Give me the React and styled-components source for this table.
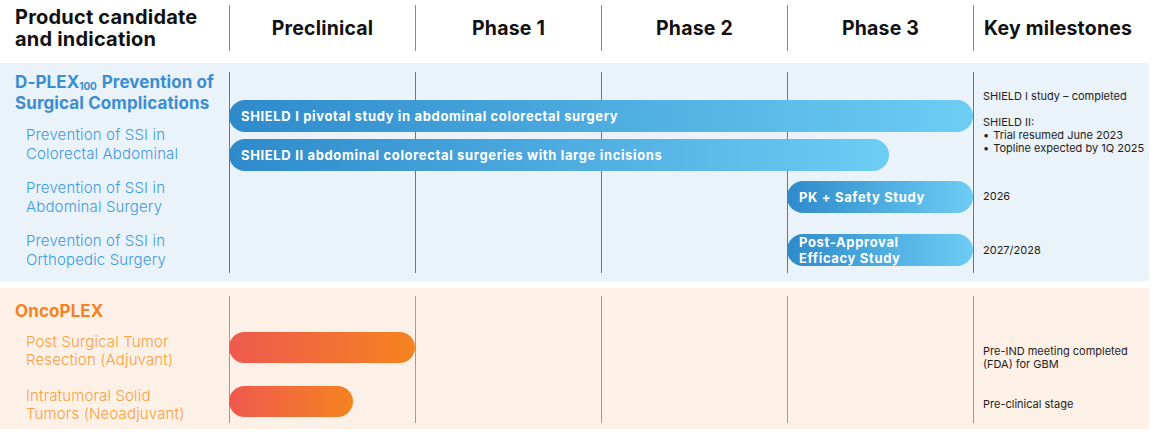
import styled, { createGlobalStyle } from "styled-components";

const COL = 186;

const GlobalStyle = createGlobalStyle`
	body {
		margin: 0;
		background: #ffffff;
		font-family: Inter, "Noto Sans", "Liberation Sans", sans-serif;
	}
`;

const tones = {
	blue: {
		bg: "#eaf2fa",
		line: "#2d86c7",
		title: "#3a8dd2",
		sub: "#3d9be0",
		bar: "linear-gradient(90deg, #2e8acb 0%, #6dcdf4 100%)",
	},
	orange: {
		bg: "#fdf0e7",
		line: "#f0853a",
		title: "#f5821f",
		sub: "#f6a144",
		bar: "linear-gradient(90deg, #ef594f 0%, #f5831f 100%)",
	},
};

const pipeline = [
	{
		tone: "blue",
		pad: [9, 8],
		chartEnd: 7,
		title: (
			<>
				D-PLEX<Sub>100</Sub> Prevention of Surgical Complications
			</>
		),
		titleTop: 1,
		items: [
			{ text: "Prevention of SSI in Colorectal Abdominal", top: 12 },
			{ text: "Prevention of SSI in Abdominal Surgery", top: 15 },
			{ text: "Prevention of SSI in Orthopedic Surgery", top: 15 },
		],
		bars: [
			{ label: "SHIELD I pivotal study in abdominal colorectal surgery", from: 0, to: 4, top: 28 },
			{ label: "SHIELD II abdominal colorectal surgeries with large incisions", from: 0, to: 3.55, top: 7 },
			{ label: "PK + Safety Study", from: 3, to: 4, top: 10 },
			{ label: "Post-Approval Efficacy Study", from: 3, to: 4, top: 21, twoLine: true },
		],
		milestones: [
			{ lines: ["SHIELD I study – completed"], top: 18 },
			{ lines: ["SHIELD II:"], bullets: ["Trial resumed June 2023", "Topline expected by 1Q 2025"], top: 13 },
			{ lines: ["2026"], top: 35 },
			{ lines: ["2027/2028"], top: 41 },
		],
	},
	{
		tone: "orange",
		pad: [8, 6],
		chartEnd: 5,
		title: "OncoPLEX",
		titleTop: 6,
		items: [
			{ text: "Post Surgical Tumor Resection (Adjuvant)", top: 12, lh: 18 },
			{ text: "Intratumoral Solid Tumors (Neoadjuvant)", top: 18, lh: 18 },
		],
		bars: [
			{ from: 0, to: 1, top: 36, h: 31 },
			{ from: 0, to: 0.665, top: 23, h: 31 },
		],
		milestones: [
			{ lines: ["Pre-IND meeting completed", "(FDA) for GBM"], top: 49 },
			{ lines: ["Pre-clinical stage"], top: 27 },
		],
	},
];

const Wrapper = styled.div`
	width: 1149px;
	padding-bottom: 4px;
`;

const HeaderRow = styled.div`
	display: flex;
	padding-top: 5px;
	height: 63px;
	box-sizing: border-box;
`;

const HeaderCell = styled.div`
	height: 46px;
	display: flex;
	align-items: center;
	color: #111;
	font-weight: 700;
	font-size: 19.5px;
	letter-spacing: 0.2px;
`;

const HeaderLabel = styled(HeaderCell)`
	width: 229px;
	padding-left: 15px;
	box-sizing: border-box;
	font-size: 20px;
	line-height: 22px;
`;

const PhaseCell = styled(HeaderCell)`
	width: ${COL}px;
	justify-content: center;
	border-left: 1px solid #8a8a8a;
	box-sizing: border-box;
`;

const MilestoneHead = styled(HeaderCell)`
	flex: 1;
	padding-left: 10px;
	border-left: 1px solid #8a8a8a;
`;

const Panel = styled.section`
	display: flex;
	background: ${(p) => tones[p.$tone].bg};
	padding: ${(p) => `${p.$pad[0]}px 0 ${p.$pad[1]}px`};
	margin-bottom: 7px;
`;

const Labels = styled.div`
	width: 229px;
	padding-left: 15px;
	box-sizing: border-box;
	display: flex;
	flex-direction: column;
`;

const Title = styled.div`
	margin-top: ${(p) => p.$top}px;
	font-weight: 700;
	font-size: 17px;
	line-height: 19px;
	color: ${(p) => tones[p.$tone].title};
	letter-spacing: 0.1px;
`;

function Sub({ children }) {
	return <SubText>{children}</SubText>;
}

const SubText = styled.span`
	font-size: 10px;
	position: relative;
	top: 2px;
	margin-right: 1px;
	letter-spacing: -0.2px;
`;

const Indication = styled.div`
	margin-top: ${(p) => p.$top}px;
	padding-left: 11px;
	width: 175px;
	font-size: 15px;
	font-weight: 300;
	line-height: ${(p) => p.$lh || 19}px;
	letter-spacing: 0.15px;
	color: ${(p) => tones[p.$tone].sub};
`;

const Chart = styled.div`
	width: ${COL * 4}px;
	display: flex;
	flex-direction: column;
	padding-bottom: ${(p) => p.$end}px;
	background-image: linear-gradient(
		90deg,
		${(p) => tones[p.$tone].line} 0 1px,
		transparent 1px
	);
	background-size: ${COL}px 100%;
	background-repeat: repeat-x;
`;

const Bar = styled.div`
	box-sizing: border-box;
	height: ${(p) => p.$h || 32}px;
	border-radius: 16px;
	background: ${(p) => tones[p.$tone].bar};
	display: flex;
	align-items: center;
	padding-left: 12px;
	color: #fff;
	font-weight: 700;
	font-size: 13px;
	line-height: 16px;
	letter-spacing: 0.65px;
	white-space: ${(p) => (p.$twoLine ? "normal" : "nowrap")};
	overflow: hidden;
`;

const BarText = styled.span`
	max-width: ${(p) => (p.$twoLine ? "115px" : "none")};
`;

const Milestones = styled.div`
	flex: 1;
	border-left: 1px solid ${(p) => tones[p.$tone].line};
	padding-left: 9px;
	display: flex;
	flex-direction: column;
	color: #1d1d1d;
	font-size: 11px;
	line-height: 13px;
	white-space: nowrap;
`;

const Milestone = styled.div`
	margin-top: ${(p) => p.$top}px;
`;

const Bullet = styled.div`
	display: flex;
	gap: 4px;

	&::before {
		content: "•";
	}
`;

const Section = ({ row }) => (
	<Panel $tone={row.tone} $pad={row.pad}>
		<Labels>
			<Title $tone={row.tone} $top={row.titleTop}>
				{row.title}
			</Title>
			{row.items.map((it) => (
				<Indication key={it.text} $tone={row.tone} $top={it.top} $lh={it.lh}>
					{it.text}
				</Indication>
			))}
		</Labels>
		<Chart $tone={row.tone} $end={row.chartEnd}>
			{row.bars.map((b, i) => (
				<Bar
					key={i}
					$tone={row.tone}
					$h={b.h}
					$twoLine={b.twoLine}
					style={{
						marginTop: b.top,
						marginLeft: b.from * COL,
						width: (b.to - b.from) * COL,
					}}>
					{b.label && <BarText $twoLine={b.twoLine}>{b.label}</BarText>}
				</Bar>
			))}
		</Chart>
		<Milestones $tone={row.tone}>
			{row.milestones.map((m, i) => (
				<Milestone key={i} $top={m.top}>
					{m.lines.map((l) => (
						<div key={l}>{l}</div>
					))}
					{m.bullets?.map((b) => (
						<Bullet key={b}>{b}</Bullet>
					))}
				</Milestone>
			))}
		</Milestones>
	</Panel>
);

const App = () => {
	return (
		<>
			<GlobalStyle />
			<Wrapper>
				<HeaderRow>
					<HeaderLabel>
						Product candidate
						<br />
						and indication
					</HeaderLabel>
					<PhaseCell>Preclinical</PhaseCell>
					<PhaseCell>Phase 1</PhaseCell>
					<PhaseCell>Phase 2</PhaseCell>
					<PhaseCell>Phase 3</PhaseCell>
					<MilestoneHead>Key milestones</MilestoneHead>
				</HeaderRow>
				{pipeline.map((row) => (
					<Section key={row.tone} row={row} />
				))}
			</Wrapper>
		</>
	);
};

export default App;
